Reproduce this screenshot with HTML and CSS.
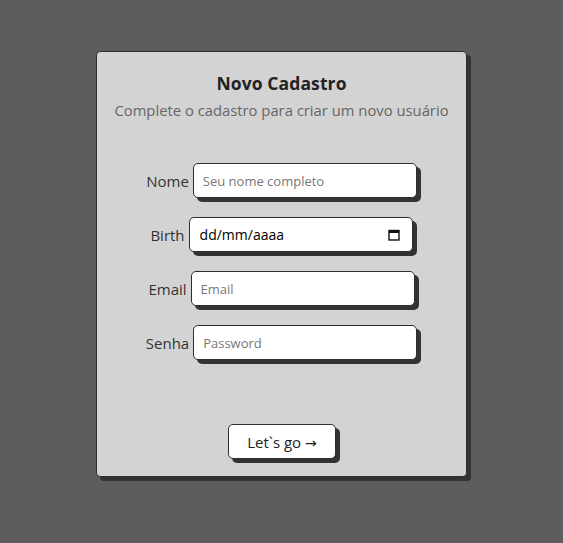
FILE: index.html
```html
<!DOCTYPE html>
<html lang="pt-BR">
<head>
<meta charset="utf-8">
<title>Novo Cadastro</title>
<link rel="stylesheet" href="styles.css">
</head>
<body>
<main class="card">
  <h1 class="title">Novo Cadastro</h1>
  <p class="subtitle">Complete o cadastro para criar um novo usuário</p>
  <form class="form">
    <div class="row">
      <label class="label" for="nome">Nome</label>
      <input class="input" id="nome" type="text" placeholder="Seu nome completo">
    </div>
    <div class="row">
      <label class="label" for="birth">Birth</label>
      <div class="date-field">
        <input class="date-input" id="birth" type="text" placeholder="dd/mm/aaaa">
        <svg class="cal" width="12" height="12" viewBox="0 0 12 12" aria-hidden="true">
          <rect x="1" y="1.5" width="10" height="9.5" fill="none" stroke="#111" stroke-width="1.4"/>
          <rect x="1" y="1.5" width="10" height="2.5" fill="#111"/>
        </svg>
      </div>
    </div>
    <div class="row">
      <label class="label" for="email">Email</label>
      <input class="input" id="email" type="email" placeholder="Email">
    </div>
    <div class="row">
      <label class="label" for="senha">Senha</label>
      <input class="input" id="senha" type="password" placeholder="Password">
    </div>
    <button class="btn" type="button">Let`s go <span class="arrow">→</span></button>
  </form>
</main>
</body>
</html>
```
FILE: styles.css
```css
* { box-sizing: border-box; }
html, body { margin: 0; }
body {
  background: #5e5c5e;
  font-family: "Open Sans", "Noto Sans", sans-serif;
  padding-top: 51px;
  height: 543px;
}
.card {
  width: 371px;
  height: 426px;
  margin: 0 auto;
  background: #d3d3d3;
  border: 1px solid #2e2e2e;
  border-radius: 4px;
  box-shadow: 4px 4px 0 #333;
  display: flex;
  flex-direction: column;
  align-items: center;
  padding-top: 19px;
}
.title {
  margin: 0;
  font-size: 17.5px;
  line-height: 24px;
  font-weight: 700;
  color: #222;
  letter-spacing: 0.1px;
}
.subtitle {
  margin: 5px 0 0;
  font-size: 14.8px;
  line-height: 20px;
  color: #666;
}
.form {
  margin-top: 43px;
  display: flex;
  flex-direction: column;
  align-items: center;
  gap: 19px;
}
.row {
  display: flex;
  align-items: center;
  gap: 4px;
  height: 35px;
}
.label {
  font-size: 15px;
  color: #333;
}
.input, .date-field {
  width: 224px;
  height: 35px;
  border: 1px solid #2e2e2e;
  border-radius: 5px;
  box-shadow: 4px 4px 0 #333;
  background: #fff;
}
.input {
  padding: 0 9px;
  font-family: "Open Sans", "Noto Sans", sans-serif;
  font-size: 13px;
  color: #222;
  outline: none;
}
.input::placeholder { color: #777; }
.date-field {
  display: flex;
  align-items: center;
  padding: 0 12px 0 10px;
}
.date-input {
  flex: 1;
  min-width: 0;
  border: none;
  outline: none;
  background: transparent;
  padding: 0;
  font-family: "Open Sans", "Noto Sans", sans-serif;
  font-size: 14px;
  color: #000;
}
.date-input::placeholder { color: #000; }
.cal { flex: none; }
.btn {
  margin-top: 45px;
  margin-left: 1px;
  width: 108px;
  height: 35px;
  background: #fff;
  border: 1px solid #2e2e2e;
  border-radius: 5px;
  box-shadow: 4px 4px 0 #333;
  font-family: "Open Sans", "Noto Sans", sans-serif;
  font-size: 15px;
  color: #222;
  cursor: pointer;
}
.arrow {
  font-family: "DejaVu Sans", sans-serif;
  font-size: 14px;
}
```
